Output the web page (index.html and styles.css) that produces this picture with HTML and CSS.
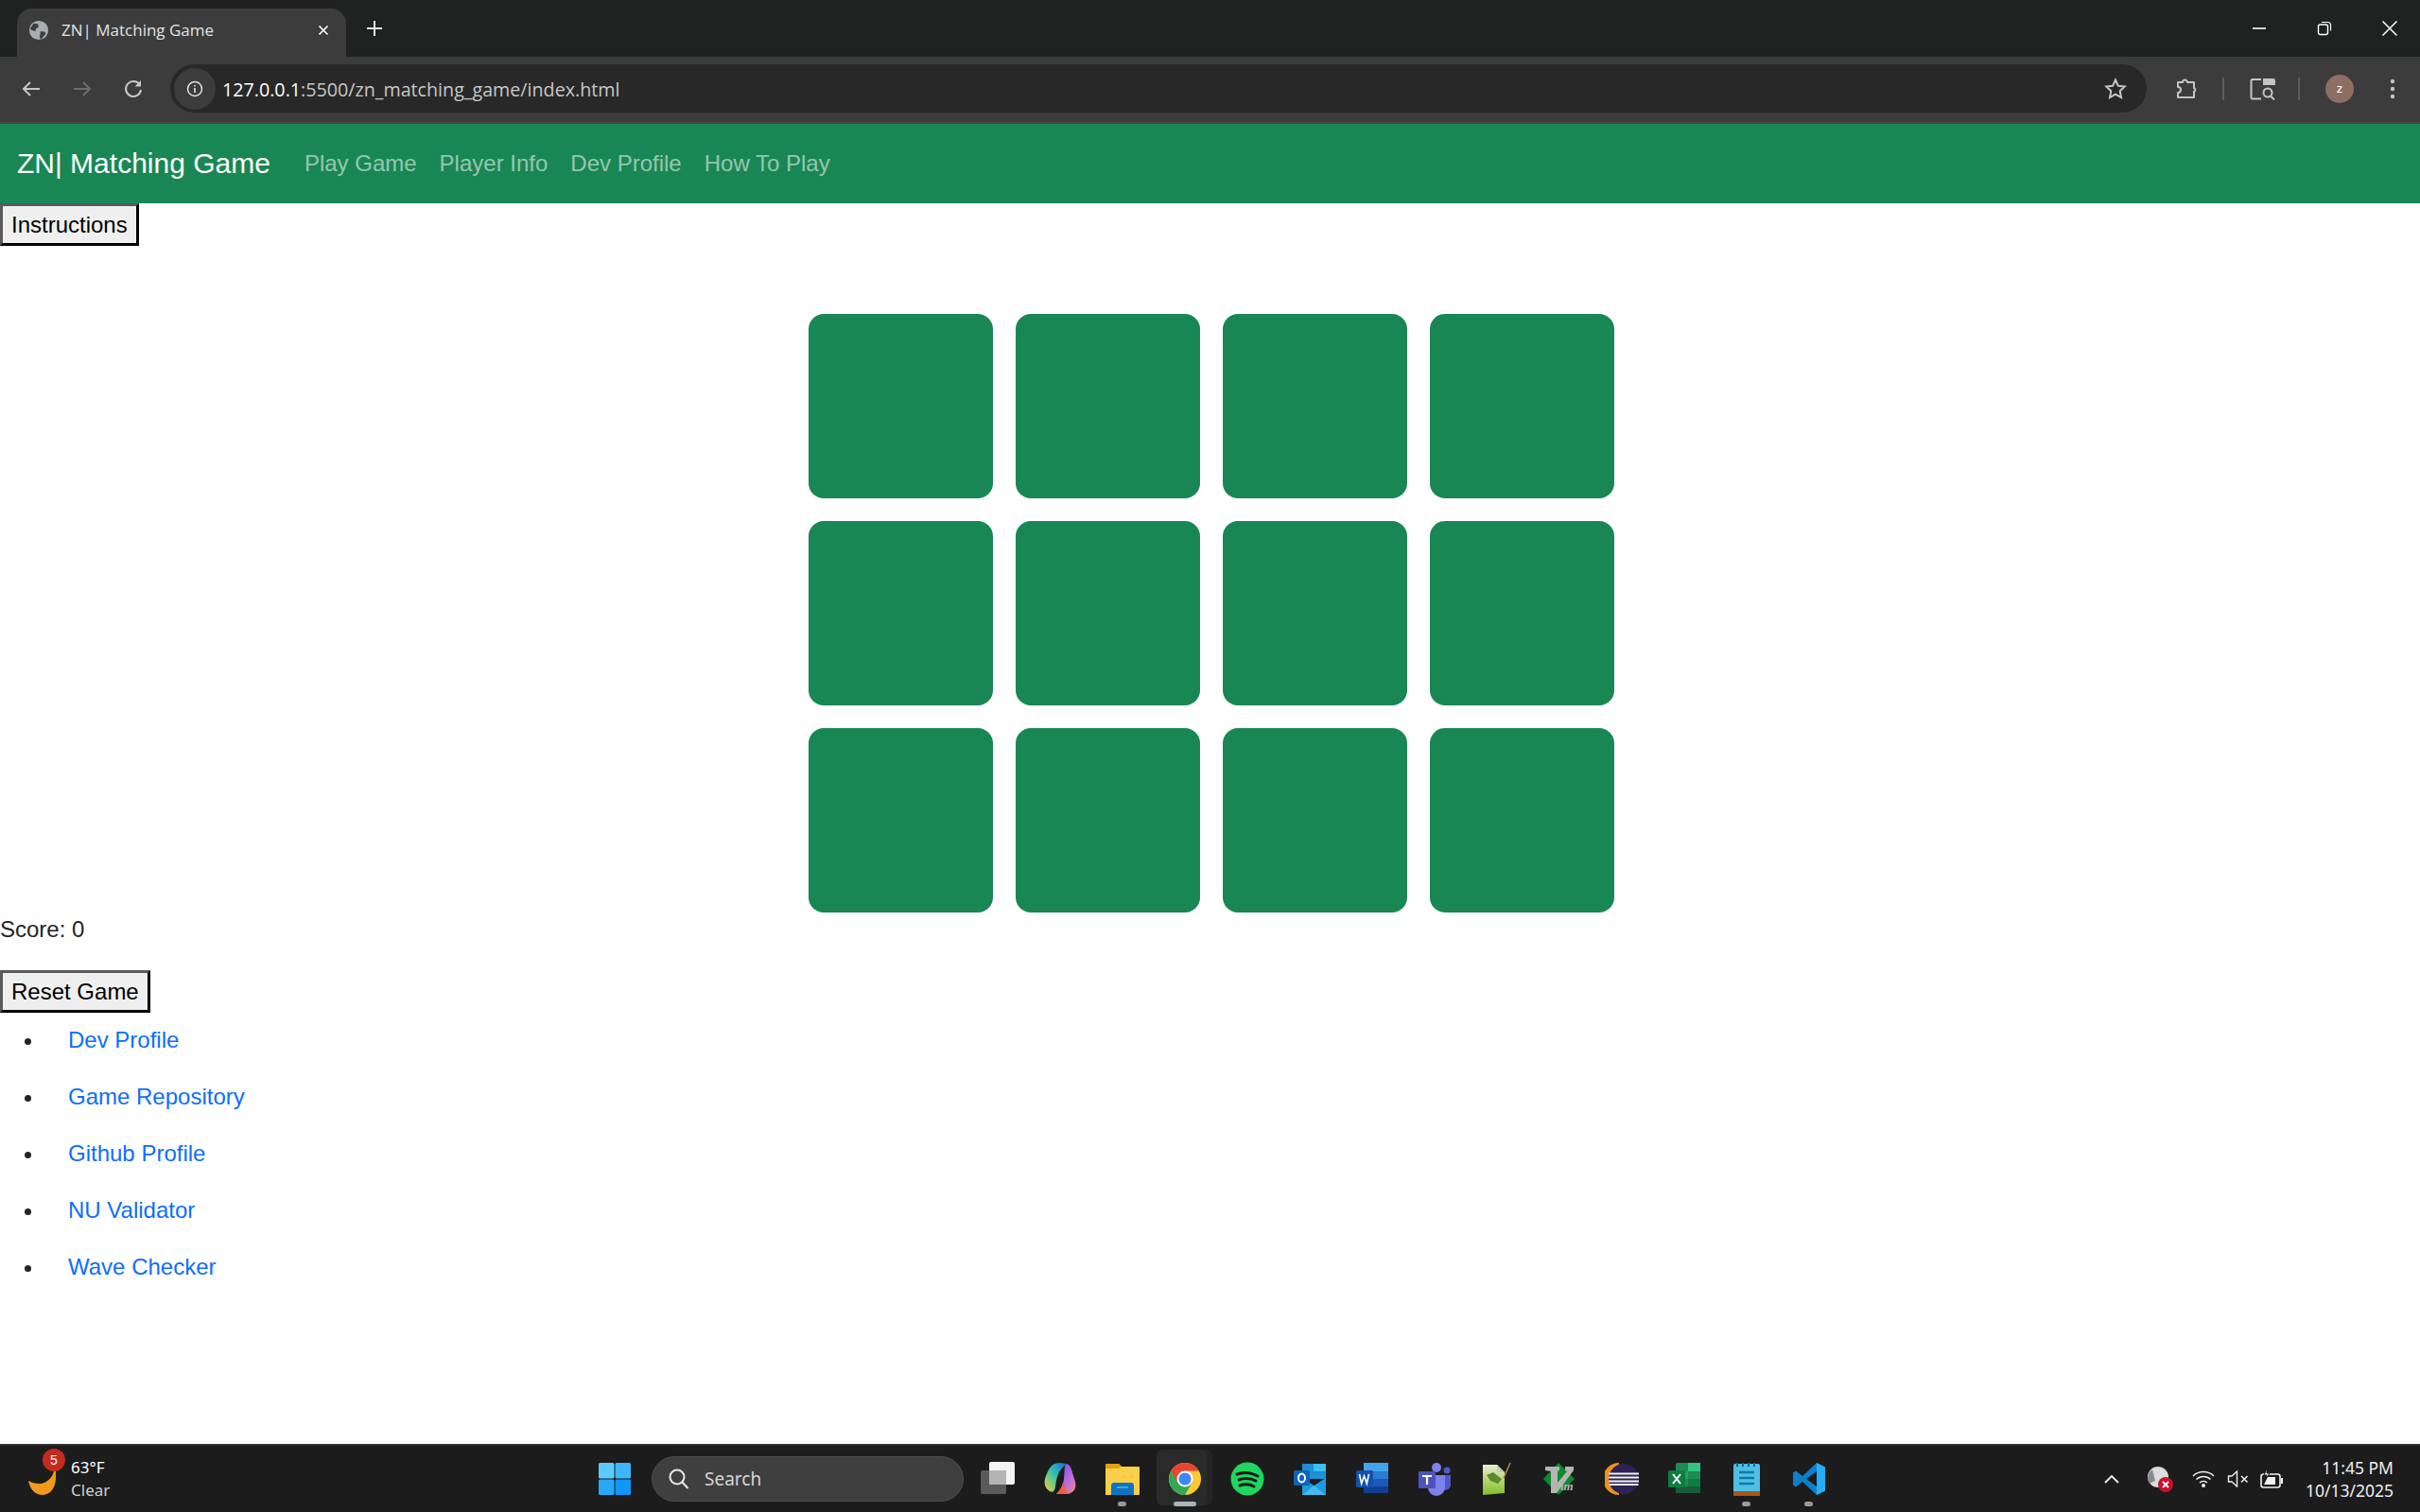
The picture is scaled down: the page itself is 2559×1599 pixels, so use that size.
FILE: index.html
```html
<!DOCTYPE html>
<html lang="en">
<head>
  <meta charset="UTF-8">
  <title>ZN| Matching Game</title>
  <link rel="stylesheet" href="styles.css">
</head>
<body>

<!-- browser window -->
<div class="tabstrip">
  <div class="tab">
    <svg class="tab-globe" viewBox="0 0 24 24"><circle cx="12" cy="12" r="11" fill="#a9acb0"/><path d="M6 4l5 1 1 3-3 2-1 3-4-1-2-2zM14 13l5 1 1 2-5 6-2-1z" fill="#3d3d3d"/></svg>
    <span class="tab-title">ZN| Matching Game</span>
    <svg class="tab-close" viewBox="0 0 12 12"><path d="M1.5 1.5l9 9M10.5 1.5l-9 9" stroke="#fff" stroke-width="1.6"/></svg>
  </div>
  <svg class="tab-new" viewBox="0 0 16 16"><path d="M8 0v16M0 8h16" stroke="#e4e4e4" stroke-width="2"/></svg>
  <div class="win-btns">
    <svg class="win-btn" viewBox="0 0 16 16"><path d="M1 8h14" stroke="#fff" stroke-width="1.6"/></svg>
    <svg class="win-btn" viewBox="0 0 16 16"><rect x="1.5" y="4" width="10" height="10.5" rx="2" fill="none" stroke="#fff" stroke-width="1.4"/><path d="M5 1.5h6.500a3 3 0 0 1 3 3v6" fill="none" stroke="#fff" stroke-width="1.2"/></svg>
    <svg class="win-btn" viewBox="0 0 16 16"><path d="M.5.5l15 15M15.500.5l-15 15" stroke="#fff" stroke-width="1.5"/></svg>
  </div>
</div>

<div class="toolbar">
  <svg class="tool-icon" viewBox="0 0 24 24"><path d="M21 12H4M11 5l-7 7 7 7" fill="none" stroke="#c7c7c7" stroke-width="2"/></svg>
  <svg class="tool-icon" viewBox="0 0 24 24"><path d="M3 12h17M13 5l7 7-7 7" fill="none" stroke="#6d6d6d" stroke-width="2"/></svg>
  <svg class="tool-icon" viewBox="0 0 24 24"><path d="M19 8a8 8 0 1 0 1 5" fill="none" stroke="#c7c7c7" stroke-width="2"/><path d="M20 3v6.500h-6.500z" fill="#c7c7c7"/></svg>
  <div class="omnibox">
    <span class="site-info">
      <svg viewBox="0 0 20 20"><circle cx="10" cy="10" r="7.500" fill="none" stroke="#e3e3e3" stroke-width="1.5"/><path d="M10 9v5M10 6v1.600" stroke="#e3e3e3" stroke-width="1.600"/></svg>
    </span>
    <span class="url">127.0.0.1<span class="url-dim">:5500/zn_matching_game/index.html</span></span>
    <svg class="star" viewBox="0 0 24 24"><path d="M12 2.500l2.900 6.300 6.800.8-5 4.700 1.300 6.800-6-3.400-6 3.400 1.300-6.800-5-4.700 6.800-.8z" fill="none" stroke="#c7c7c7" stroke-width="2"/></svg>
  </div>
  <svg class="tool-ext" viewBox="0 0 24 24"><path d="M3 5h5a2.500 2.500 0 0 1 5 0h7v6a2.200 2.200 0 0 1 0 4v6H3v-5a2.500 2.500 0 0 0 0-6z" fill="none" stroke="#c4c4c4" stroke-width="2" stroke-linejoin="round"/></svg>
  <span class="tool-sep"></span>
  <svg class="tool-lens" viewBox="0 0 28 24"><path d="M12 2H3a1.500 1.500 0 0 0-1.500 1.500V21A1.500 1.500 0 0 0 3 22.500h9" fill="none" stroke="#c4c4c4" stroke-width="2"/><path d="M14 1h11a2 2 0 0 1 2 2v5H14z" fill="#c4c4c4"/><circle cx="19" cy="16" r="4.500" fill="none" stroke="#c4c4c4" stroke-width="2"/><path d="M22 19.500l4 4" stroke="#c4c4c4" stroke-width="2"/></svg>
  <span class="tool-sep"></span>
  <span class="avatar">z</span>
  <svg class="tool-menu" viewBox="0 0 6 24"><circle cx="3" cy="4" r="2.200"/><circle cx="3" cy="12" r="2.200"/><circle cx="3" cy="20" r="2.200"/></svg>
</div>

<!-- the game page -->
<div class="page">
  <nav class="navbar">
    <a class="brand" href="#">ZN| Matching Game</a>
    <a class="nav-link" href="#">Play Game</a>
    <a class="nav-link" href="#">Player Info</a>
    <a class="nav-link" href="#">Dev Profile</a>
    <a class="nav-link" href="#">How To Play</a>
  </nav>

  <button class="plain-btn">Instructions</button>

  <div class="board">
    <div class="card"></div><div class="card"></div><div class="card"></div><div class="card"></div>
    <div class="card"></div><div class="card"></div><div class="card"></div><div class="card"></div>
    <div class="card"></div><div class="card"></div><div class="card"></div><div class="card"></div>
  </div>

  <p class="score">Score: 0</p>
  <button class="plain-btn">Reset Game</button>

  <ul class="links">
    <li><a href="#">Dev Profile</a></li>
    <li><a href="#">Game Repository</a></li>
    <li><a href="#">Github Profile</a></li>
    <li><a href="#">NU Validator</a></li>
    <li><a href="#">Wave Checker</a></li>
  </ul>
</div>

<!-- windows taskbar -->
<div class="taskbar">
  <div class="weather">
    <span class="moon-wrap">
      <svg class="moon" viewBox="0 0 36 36"><path d="M29 2c2 12-6 20-14 21-4 .5-9-1-13-3 2 10 8 15 15 15 11 0 18-14 12-33z" fill="#f09a1e"/></svg>
      <span class="badge">5</span>
    </span>
    <span class="weather-text"><span>63°F</span><span class="weather-sub">Clear</span></span>
  </div>

  <div class="task-center">
    <svg class="task-icon" viewBox="0 0 36 36"><rect x="1" y="1" width="16.500" height="16.500" rx="1.500" fill="#5ccbfb"/><rect x="18.500" y="1" width="16.500" height="16.500" rx="1.500" fill="#3db6fa"/><rect x="1" y="18.500" width="16.500" height="16.500" rx="1.500" fill="#28a8fb"/><rect x="18.500" y="18.500" width="16.500" height="16.500" rx="1.500" fill="#0f97fb"/></svg>
    <div class="search">
      <svg viewBox="0 0 24 24"><circle cx="10" cy="10" r="7.500" fill="none" stroke="#e8e8e8" stroke-width="2"/><path d="M15.500 15.500l6 6.500" stroke="#e8e8e8" stroke-width="2"/></svg>
      <span>Search</span>
    </div>
    <!-- task view -->
    <svg class="task-icon" viewBox="0 0 36 36"><rect x="0" y="9" width="27" height="25" rx="2" fill="#5a5a5a"/><rect x="9" y="0" width="27" height="24" rx="2" fill="#f4f4f4"/><rect x="9" y="9" width="18" height="15" fill="#b4b4b4"/></svg>
    <!-- copilot -->
    <svg class="task-icon" viewBox="0 0 36 36"><defs><linearGradient id="cp1" x1="1" y1="0" x2="0" y2="1"><stop offset="0" stop-color="#1f6fe0"/><stop offset=".45" stop-color="#2fc0b0"/><stop offset="1" stop-color="#f2d22e"/></linearGradient><linearGradient id="cp2" x1="0" y1="0" x2="1" y2="1"><stop offset="0" stop-color="#4a5be0"/><stop offset=".5" stop-color="#b065e0"/><stop offset="1" stop-color="#f08a9a"/></linearGradient></defs><path d="M24 2c3 0 5 3 6 6l3 10c4 10-1 15-7 16H14c4-4 7-9 8-16 1-8 0-13 2-16z" fill="url(#cp2)"/><path d="M12 2c2-1 10-1 12 0l-5 6c-3 3-5 10-6 18-.5 5-3 7-6 5-5-3-7-9-4-16C5 9 8 4 12 2z" fill="url(#cp1)"/><path d="M14 34c3-3 6-7 7-12l5 12z" fill="#f0603c"/></svg>
    <span class="task-slot has-dot">
      <svg class="task-icon" viewBox="0 0 36 36"><path d="M0 3a1 1 0 0 1 1-1h13l3 3h18a1 1 0 0 1 1 1v28a1 1 0 0 1-1 1H0z" fill="#fbcf4a"/><path d="M0 3a1 1 0 0 1 1-1h13l3 3-3 2H0z" fill="#dfa310"/><path d="M6 34V24a3 3 0 0 1 3-3h18a3 3 0 0 1 3 3v10z" transform="translate(0 1)" fill="#0c74c2"/><path d="M12 27h12" stroke="#5bb2e8" stroke-width="1.500"/></svg>
    </span>
    <span class="task-slot active">
      <svg class="task-icon" viewBox="0 0 36 36"><circle cx="18" cy="18" r="17" fill="#fcc934"/><path d="M3.300 9.500A17 17 0 0 0 18 35l7.400-12.800L18 18z" fill="#34a853"/><path d="M3.300 9.500a17 17 0 0 1 29.400 0H18l-7.400 12.750z" fill="#ea4335"/><circle cx="18" cy="18" r="8.500" fill="#fff"/><circle cx="18" cy="18" r="6.600" fill="#4285f4"/></svg>
    </span>
    <svg class="task-icon" viewBox="0 0 36 36"><circle cx="18" cy="18" r="17.500" fill="#1ed760"/><path d="M7 13q11-4 22 2M9 19q9-3.500 18 1M10 25q8-3 15 1" fill="none" stroke="#1a1a1a" stroke-width="3" stroke-linecap="round"/></svg>
    <svg class="task-icon" viewBox="0 0 36 36"><rect x="10" y="2" width="25" height="16" fill="#1f8fd8"/><rect x="22" y="2" width="13" height="8" fill="#3cc0f0"/><path d="M10 17l12.500 8L35 17v18H10z" fill="#1a9ce0"/><path d="M10 35l12.500-10L35 35z" fill="#46b8ee"/><rect x="1" y="9" width="17" height="16" rx="1.500" fill="#0d64b8"/><ellipse cx="9.500" cy="17" rx="3.500" ry="4.500" fill="none" stroke="#fff" stroke-width="2"/></svg>
    <svg class="task-icon" viewBox="0 0 36 36"><rect x="9" y="1" width="26" height="32" rx="2" fill="#2b7cd3"/><rect x="9" y="1" width="26" height="9" fill="#41a5ee"/><rect x="9" y="18" width="26" height="8" fill="#185abd"/><rect x="9" y="26" width="26" height="7" fill="#103f91"/><rect x="1" y="9" width="18" height="18" rx="1.500" fill="#1550ac"/><path d="M4.500 13l2.200 10 2.800-8 2.800 8 2.200-10" fill="none" stroke="#fff" stroke-width="1.600"/></svg>
    <svg class="task-icon" viewBox="0 0 36 36"><circle cx="20" cy="6" r="5" fill="#7b83eb"/><circle cx="31" cy="9" r="3.500" fill="#5059c9"/><path d="M26 14h9v11a6 6 0 0 1-9 4z" fill="#5059c9"/><path d="M11 14h18v13a9 9 0 0 1-18 0z" fill="#7b83eb"/><rect x="1" y="10" width="18" height="18" rx="1.500" fill="#4b53bc"/><path d="M5 15h10M10 15v9" stroke="#fff" stroke-width="2.200"/></svg>
    <!-- notepad++ -->
    <svg class="task-icon" viewBox="0 0 36 36"><defs><linearGradient id="npp" x1="0" y1="0" x2="0" y2="1"><stop offset="0" stop-color="#e9edd8"/><stop offset=".45" stop-color="#b9d978"/><stop offset="1" stop-color="#7fbf2a"/></linearGradient></defs><path d="M3 3h15l8 8v22L3 35z" fill="url(#npp)"/><path d="M18 3v8h8z" fill="#c5ccb0"/><path d="M7 14l7-3 5 4 4 3-4 5-8-3z" fill="#5d8a2e"/><path d="M25 17L32 1" stroke="#b08a3a" stroke-width="1.500"/></svg>
    <!-- vim -->
    <svg class="task-icon" viewBox="0 0 36 36"><path d="M17 1l17 17-17 17L1 18z" fill="#0c8a2d"/><path d="M3 5h15v4l-2 1v12L26 10l-2-1V5h9v4L15 33H9V10L3 9z" fill="#b4b4b4"/><text class="vim-text" x="19" y="30">im</text></svg>
    <!-- eclipse -->
    <svg class="task-icon" viewBox="0 0 36 36"><path d="M15 1a17 17 0 0 0 0 34z" fill="#f2911c"/><circle cx="20" cy="18" r="16" fill="#2c2255"/><path d="M4 12.500h32M4 16.500h32M4 20.500h32M4.500 24h31" stroke="#f3f3f3" stroke-width="1.800"/></svg>
    <svg class="task-icon" viewBox="0 0 36 36"><rect x="9" y="1" width="26" height="32" rx="2" fill="#1f8a54"/><rect x="22" y="1" width="13" height="9" fill="#33c481"/><rect x="9" y="10" width="13" height="8" fill="#21a366"/><rect x="22" y="18" width="13" height="8" fill="#107c41"/><rect x="9" y="26" width="26" height="7" fill="#185c37"/><rect x="1" y="9" width="18" height="18" rx="1.500" fill="#107c41"/><path d="M6 13l8 10M14 13l-8 10" stroke="#fff" stroke-width="2"/></svg>
    <span class="task-slot has-dot">
      <svg class="task-icon" viewBox="0 0 36 36"><rect x="4" y="2" width="28" height="33" rx="2" fill="#4fbfe4"/><rect x="4" y="31" width="28" height="5" fill="#a8571e"/><path d="M8 1v4M14 1v4M20 1v4M26 1v4" stroke="#0e6a8c" stroke-width="2"/><path d="M10 11h16M10 17h16M10 23h16" stroke="#0e7ba6" stroke-width="2.500"/></svg>
    </span>
    <span class="task-slot has-dot">
      <svg class="task-icon" viewBox="0 0 36 36"><path d="M26 1l9 4.500v25L26 35 11 21l-7 5.500-3-2V11.500l3-2 7 5.500z" fill="#0e7fcb"/><path d="M26 10L15 18l11 8z" fill="#1c1c1c"/><path d="M26 1l9 4.500v25L26 35V26L26 10z" fill="#24aef5"/></svg>
    </span>
  </div>

  <div class="tray">
    <svg class="tray-caret" viewBox="0 0 16 10"><path d="M1 9l7-7 7 7" fill="none" stroke="#f0f0f0" stroke-width="1.800"/></svg>
    <svg class="tray-cloud" viewBox="0 0 30 30"><circle cx="13" cy="13" r="11" fill="#dcdcdc"/><path d="M7 5a11 11 0 0 0-3 15l6-3z" fill="#8a8a8a"/><circle cx="21" cy="21" r="8" fill="#c8102e"/><path d="M18 18l6 6M24 18l-6 6" stroke="#fff" stroke-width="1.800"/></svg>
    <svg class="tray-wifi" viewBox="0 0 24 20"><path d="M1 7a16 16 0 0 1 22 0M4.500 10.500a11 11 0 0 1 15 0M8 14a6 6 0 0 1 8 0" fill="none" stroke="#f0f0f0" stroke-width="1.500"/><circle cx="12" cy="17" r="2" fill="#f0f0f0"/></svg>
    <svg class="tray-sound" viewBox="0 0 24 20"><path d="M1.500 7v6h3.500l5.500 5V2L5 7z" fill="none" stroke="#f0f0f0" stroke-width="1.400"/><path d="M15 7l6.500 6.500M21.500 7L15 13.500" stroke="#f0f0f0" stroke-width="1.500"/></svg>
    <svg class="tray-battery" viewBox="0 0 26 22"><rect x="1" y="6" width="20" height="14" rx="2.500" fill="none" stroke="#f0f0f0" stroke-width="1.600"/><path d="M4 17l4-8h8v8z" fill="#f0f0f0"/><path d="M23 10v6" stroke="#f0f0f0" stroke-width="2"/><path d="M7 0L4 7h3l-1 4 4-6H7z" fill="#f0f0f0" stroke="#1c1c1c"/></svg>
    <div class="clock"><span>11:45 PM</span><span>10/13/2025</span></div>
  </div>
</div>

</body>
</html>
```

FILE: styles.css
```css
* {
  box-sizing: border-box;
}
html, body {
  height: 100%;
}
body {
  margin: 0;
  height: 1599px;
  display: flex;
  flex-direction: column;
  overflow: hidden;
  font-family: "Liberation Sans", Arial, sans-serif;
  font-size: 24px;
  color: #212529;
  background: #fff;
}

/* browser tabs */
.tabstrip {
  height: 60px;
  flex: none;
  display: flex;
  align-items: flex-start;
  background: #202221;
  padding: 9px 0 0 18px;
}
.tab {
  width: 348px;
  height: 51px;
  display: flex;
  align-items: center;
  gap: 13px;
  padding: 0 18px 6px 12px;
  background: #3c3c3c;
  border-radius: 16px 16px 0 0;
}
.tab-globe {
  width: 22px;
  height: 22px;
  flex: none;
}
.tab-title {
  flex: 1;
  font-family: "Open Sans", "Liberation Sans", sans-serif;
  font-size: 17px;
  color: #e3e3e3;
  white-space: nowrap;
}
.tab-close {
  width: 12px;
  height: 12px;
  flex: none;
}
.tab-new {
  width: 16px;
  height: 16px;
  margin: 13px 0 0 22px;
}
.win-btns {
  margin-left: auto;
  display: flex;
  align-items: center;
  gap: 53px;
  padding: 13px 24px 0 0;
}
.win-btn {
  width: 16px;
  height: 16px;
}

.toolbar {
  height: 71px;
  flex: none;
  display: flex;
  align-items: center;
  padding: 0 0 2px 21px;
  background: #3c3c3c;
  border-bottom: 2px solid #464646;
}
.tool-icon {
  width: 24px;
  height: 24px;
  margin-right: 30px;
  flex: none;
}
.tool-icon:nth-child(3) {
  margin-right: 27px;
}
.omnibox {
  width: 2090px;
  height: 51px;
  display: flex;
  align-items: center;
  padding: 0 21px 0 4px;
  background: #282828;
  border-radius: 26px;
}
.site-info {
  width: 44px;
  height: 44px;
  display: flex;
  align-items: center;
  justify-content: center;
  border-radius: 50%;
  background: #3c3c3c;
}
.site-info svg {
  width: 20px;
  height: 20px;
}
.url {
  flex: 1;
  margin-left: 7px;
  padding-top: 2px;
  font-family: "Open Sans", "Liberation Sans", sans-serif;
  font-size: 19.700px;
  color: #fff;
}
.url-dim {
  color: #c7c7c7;
}
.star {
  width: 24px;
  height: 24px;
}
.tool-ext {
  width: 24px;
  height: 24px;
  margin: 0 2px 0 30px;
}
.tool-sep {
  width: 2px;
  height: 24px;
  margin: 0 24px;
  background: #5c5c5c;
}
.tool-lens {
  width: 28px;
  height: 24px;
  margin-left: 3px;
}
.tool-lens + .tool-sep {
  margin-left: 23px;
}
.avatar {
  width: 30px;
  height: 30px;
  margin-left: 3px;
  display: flex;
  align-items: center;
  justify-content: center;
  border-radius: 50%;
  background: #8d6e63;
  color: #fff;
  font-size: 13px;
}
.tool-menu {
  width: 6px;
  height: 24px;
  margin-left: 38px;
  fill: #c4c4c4;
}

/* page */
.page {
  flex: 1;
  min-height: 0;
}
.navbar {
  height: 84px;
  display: flex;
  align-items: center;
  padding: 0 18px;
  background: #198754;
}
.brand {
  margin-right: 24px;
  color: #fff;
  font-size: 30px;
  text-decoration: none;
}
.nav-link {
  padding: 0 12px;
  color: rgba(255, 255, 255, 0.55);
  font-size: 24px;
  text-decoration: none;
}
.plain-btn {
  display: block;
  padding: 2px 9px;
  height: 45px;
  font-family: "Liberation Sans", Arial, sans-serif;
  font-size: 24px;
  color: #000;
  background: #efefef;
  border: 3px solid;
  border-color: #5a5a5a #000 #000 #5a5a5a;
}
.board {
  width: 852px;
  margin: 72px 0 0 855px;
  display: grid;
  grid-template-columns: repeat(4, 195px);
  grid-auto-rows: 195px;
  gap: 24px;
}
.card {
  background: #198754;
  border-radius: 16px;
}
.score {
  margin: 0;
  height: 61px;
  line-height: 35px;
}
.links {
  margin: 0;
  padding: 9px 0 0 47px;
}
.links li {
  height: 60px;
  padding-left: 25px;
  line-height: 39px;
}
.links a {
  color: #0d6efd;
  text-decoration: none;
}

/* taskbar */
.taskbar {
  height: 72px;
  flex: none;
  display: flex;
  align-items: center;
  position: relative;
  background: #1c1c1c;
  border-top: 2px solid #2e2e2e;
}
.weather {
  display: flex;
  align-items: center;
  gap: 11px;
  padding-left: 28px;
}
.moon-wrap {
  position: relative;
  width: 36px;
  height: 36px;
}
.moon {
  width: 36px;
  height: 36px;
}
.badge {
  position: absolute;
  left: 17px;
  top: -14px;
  width: 24px;
  height: 24px;
  display: flex;
  align-items: center;
  justify-content: center;
  border-radius: 50%;
  background: #c42b1c;
  color: #fff;
  font-size: 14px;
}
.weather-text {
  display: flex;
  flex-direction: column;
  font-family: "Noto Sans", sans-serif;
  font-size: 17px;
  line-height: 24px;
  color: #fff;
}
.weather-sub {
  color: #d0d0d0;
}
.task-center {
  position: absolute;
  left: 632px;
  top: 0;
  height: 70px;
  display: flex;
  align-items: center;
}
.task-icon {
  width: 36px;
  height: 36px;
  flex: none;
  margin-right: 30px;
}
.search {
  width: 330px;
  height: 48px;
  margin: 0 18px 0 -9px;
  display: flex;
  align-items: center;
  gap: 15px;
  padding: 0 16px;
  border-radius: 24px;
  background: #3f3f3f;
  border: 1px solid #4c4c4c;
  font-family: "Noto Sans", sans-serif;
  font-size: 19px;
  color: #d6d6d6;
}
.search svg {
  width: 24px;
  height: 24px;
}
.task-slot {
  position: relative;
  display: flex;
}
.has-dot::after {
  content: "";
  position: absolute;
  left: 13px;
  bottom: -11px;
  width: 9px;
  height: 5px;
  border-radius: 3px;
  background: #9a9a9a;
}
.active::before {
  content: "";
  position: absolute;
  left: -12px;
  top: -13px;
  width: 53px;
  height: 59px;
  border-radius: 6px;
  background: #2a2a2a;
  box-shadow: 6px 0 0 #242424;
}
.active .task-icon {
  position: relative;
}
.active::after {
  content: "";
  position: absolute;
  left: 6px;
  bottom: -11px;
  width: 24px;
  height: 5px;
  border-radius: 3px;
  background: #a9b4b9;
}
.vim-text {
  font-family: "Liberation Serif", serif;
  font-style: italic;
  font-weight: bold;
  font-size: 13px;
  fill: #b4b4b4;
}
.tray {
  margin-left: auto;
  display: flex;
  align-items: center;
  padding-right: 28px;
}
.tray-caret {
  width: 16px;
  height: 10px;
  margin-right: 28px;
}
.tray-cloud {
  width: 30px;
  height: 30px;
  margin-right: 19px;
}
.tray-wifi {
  width: 24px;
  height: 20px;
  margin-right: 13px;
}
.tray-sound {
  width: 24px;
  height: 20px;
  margin-right: 11px;
}
.tray-battery {
  width: 26px;
  height: 22px;
  margin-right: 22px;
}
.clock {
  display: flex;
  flex-direction: column;
  align-items: flex-end;
  font-family: "Noto Sans", sans-serif;
  font-size: 17.500px;
  line-height: 24px;
  color: #f0f0f0;
}
```
